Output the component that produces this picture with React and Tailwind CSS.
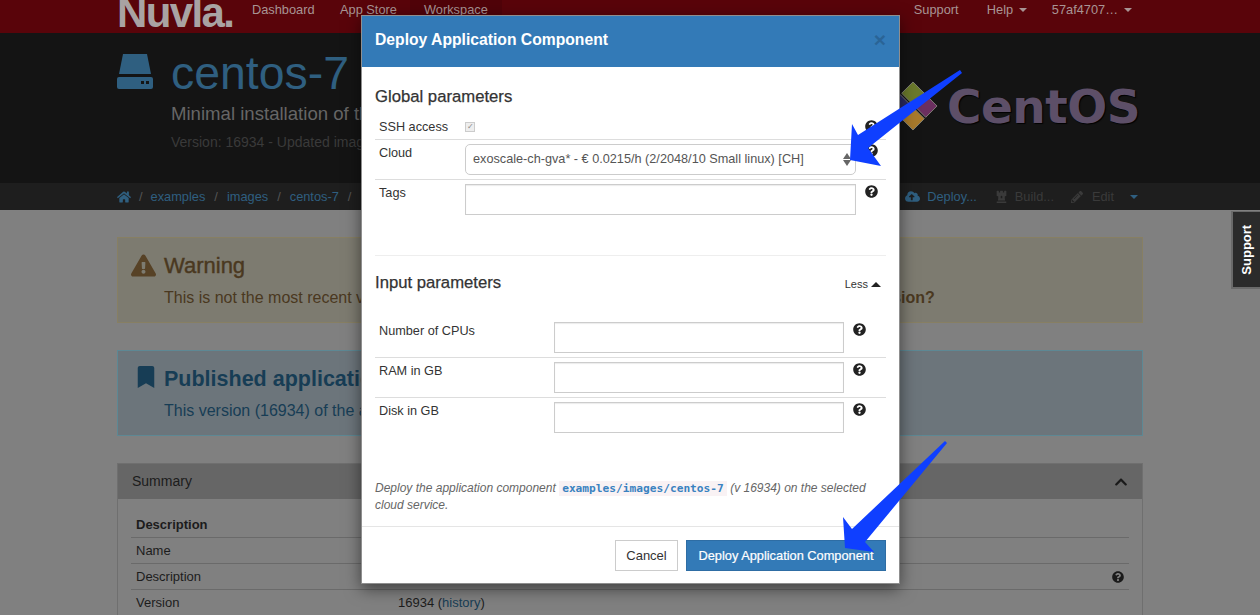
import React from "react";
import {
  FaHome,
  FaCloudUploadAlt,
  FaChessRook,
  FaPencilAlt,
  FaBookmark,
  FaExclamationTriangle,
  FaQuestionCircle,
  FaChevronUp,
} from "react-icons/fa";

const sans = "font-['Liberation_Sans',Arial,sans-serif]";

function Help({ className = "" }) {
  return <FaQuestionCircle className={`text-[13px] text-[#222] ${className}`} />;
}

function Caret({ up, className = "" }) {
  return (
    <span
      className={`inline-block w-0 h-0 ${
        up
          ? "border-x-[5px] border-x-transparent border-b-[5px] border-b-[#222]"
          : "border-x-[4px] border-x-transparent border-t-[4px] border-t-current"
      } ${className}`}
    />
  );
}

function DriveIcon() {
  return (
    <svg width="36" height="36" viewBox="0 0 36 36" className="text-[#2f5f80]">
      <path d="M6 1h24l4 20H2z" fill="currentColor" />
      <rect x="0" y="24" width="36" height="12" rx="2" fill="currentColor" />
      <rect x="24" y="28" width="3" height="3" fill="#141414" />
      <rect x="29" y="28" width="3" height="3" fill="#141414" />
    </svg>
  );
}

function CentosMark() {
  return (
    <svg width="50" height="50" viewBox="0 0 50 50">
      <g transform="rotate(45 25 25)" stroke="#8a8a80" strokeWidth="0.8">
        <rect x="8" y="8" width="16" height="16" fill="#6b7a2c" />
        <rect x="26" y="8" width="16" height="16" fill="#6b2f5f" />
        <rect x="8" y="26" width="16" height="16" fill="#2b2a63" />
        <rect x="26" y="26" width="16" height="16" fill="#a87a2c" />
      </g>
    </svg>
  );
}

function ParamRow({ label, labelWidth, top, children }) {
  return (
    <div className={`flex ${top ? "" : "border-t border-[#ddd]"}`}>
      <div className={`pl-[4px] pt-[4px] text-[12.7px] leading-[18px] text-[#333] ${labelWidth}`}>{label}</div>
      {children}
    </div>
  );
}

function InputRow({ label, top }) {
  return (
    <ParamRow label={label} labelWidth="w-[179px]" top={top}>
      <div className="mt-[4px] mb-[4px] w-[290px] h-[31px] border border-[#ccc] shadow-[inset_0_1px_1px_rgba(0,0,0,0.08)]" />
      <div className="pl-[9px] pt-[2px]">
        <Help className="mt-[3px] text-[12px]" />
      </div>
    </ParamRow>
  );
}

function SummaryRow({ label, value, bold, help }) {
  return (
    <div className="flex items-center h-[26px] border-b border-[#6a6a6a] text-[13px] text-[#1c1c1c]">
      <div className={`w-[267px] pl-[5px] ${bold ? "font-bold" : ""}`}>{label}</div>
      <div className="flex-1">{value}</div>
      {help && <FaQuestionCircle className="mr-[5px] text-[12px] text-[#1a1a1a]" />}
    </div>
  );
}

function Modal() {
  return (
    <div className="absolute left-[361px] top-[15px] w-[539px] h-[569px] flex flex-col bg-white border border-[#8f8f8f] shadow-[0_5px_15px_rgba(0,0,0,0.5)]">
      <div className="flex items-center justify-between h-[51px] pl-[13px] pr-[14px] pb-[4px] bg-[#337ab7]">
        <h4 className="text-[15.7px] font-bold text-white">Deploy Application Component</h4>
        <span className="mr-[-1px] text-[21px] font-bold leading-none text-[#2a6496]">×</span>
      </div>

      <div className="flex-1 px-[13px]">
        <h3 className="mt-[21px] mb-[8px] text-[16.7px] leading-[18px] text-[#333] [-webkit-text-stroke:0.25px_#333]">
          Global parameters
        </h3>
        <ParamRow label="SSH access" labelWidth="w-[90px]" top>
          <div className="flex h-[25px] flex-1 items-center justify-between">
            <span className="flex items-center justify-center w-[10px] h-[10px] border border-[#ccc] bg-[#eee] text-[8px] leading-none text-[#888]">
              ✓
            </span>
            <Help className="mr-[8px] mt-[-1px]" />
          </div>
        </ParamRow>
        <ParamRow label="Cloud" labelWidth="w-[90px]">
          <div className="mt-[4px] mb-[4px] relative flex items-center w-[391px] h-[31px] px-[7px] rounded-[5px] border border-[#ccc] text-[12.7px] text-[#555]">
            exoscale-ch-gva* - € 0.0215/h (2/2048/10 Small linux) [CH]
            <span className="absolute right-[4px] top-[8px] flex flex-col gap-[1px]">
              <span className="w-0 h-0 border-x-[4px] border-x-transparent border-b-[6px] border-b-[#666]" />
              <span className="w-0 h-0 border-x-[4px] border-x-transparent border-t-[6px] border-t-[#666]" />
            </span>
          </div>
          <div className="pl-[9px] pt-[4px]">
            <Help />
          </div>
        </ParamRow>
        <ParamRow label="Tags" labelWidth="w-[90px]">
          <div className="mt-[4px] w-[391px] h-[31px] border border-[#ccc] shadow-[inset_0_1px_1px_rgba(0,0,0,0.08)]" />
          <div className="pl-[9px] pt-[5px]">
            <Help />
          </div>
        </ParamRow>

        <div className="mt-[40px] border-t border-[#eee]" />

        <div className="flex items-center justify-between mt-[16px] mb-[24px]">
          <h3 className="text-[16.7px] leading-[22px] text-[#333] [-webkit-text-stroke:0.25px_#333]">
            Input parameters
          </h3>
          <span className="flex items-center gap-[3px] mt-[3px] mr-[5px] text-[11px] text-[#333]">
            Less
            <Caret up />
          </span>
        </div>

        <InputRow label="Number of CPUs" top />
        <InputRow label="RAM in GB" />
        <InputRow label="Disk in GB" />

        <p className="mt-[43px] text-[12px] italic leading-[17px] text-[#666]">
          Deploy the application component{" "}
          <code className="px-[3px] py-[1px] bg-[#f9f2f4] font-['DejaVu_Sans_Mono',monospace] text-[11.2px] font-bold not-italic text-[#3a82c0]">
            examples/images/centos-7
          </code>{" "}
          (v 16934) on the selected cloud service.
        </p>
      </div>

      <div className="flex justify-end gap-[8px] h-[57px] px-[13px] pt-[13px] border-t border-[#e5e5e5]">
        <button className="w-[63px] h-[31px] border border-[#ccc] bg-white text-[13px] text-[#333]">Cancel</button>
        <button className="w-[200px] h-[31px] border border-[#2e6da4] bg-[#337ab7] text-[12.8px] text-white [-webkit-text-stroke:0.2px_white]">
          Deploy Application Component
        </button>
      </div>
    </div>
  );
}

export default function App() {
  return (
    <div className={`relative h-[615px] overflow-hidden bg-[#808080] ${sans}`}>
      <nav className="h-[33px] overflow-hidden bg-[#59040a] text-[12.8px] text-[#a89494]">
        <div className="flex items-center h-full pl-[117px] pr-[128px]">
          <span className="w-[135px] mt-[-8px] text-[42px] font-bold leading-none tracking-[-1.6px] text-[#a9a3a3]">
            Nuvla.
          </span>
          <span className="mt-[-14px] w-[88px]">Dashboard</span>
          <span className="mt-[-14px] w-[70px]">App Store</span>
          <span className="flex items-center h-full px-[14px] bg-[#500309]">
            <span className="mt-[-14px]">Workspace</span>
          </span>
          <span className="flex-1" />
          <span className="mt-[-14px] w-[73px]">Support</span>
          <span className="mt-[-14px] w-[65px] flex items-center gap-[6px]">
            Help <Caret />
          </span>
          <span className="mt-[-14px] flex items-center gap-[6px]">
            57af4707… <Caret />
          </span>
        </div>
      </nav>

      <header className="relative h-[150px] bg-[#141414] pl-[117px]">
        <div className="flex items-start">
          <div className="w-[54px] pt-[20px]">
            <DriveIcon />
          </div>
          <div>
            <h1 className="mt-[14px] text-[46.4px] leading-[52px] text-[#2f5f80]">centos-7</h1>
            <p className="mt-[3px] text-[18.6px] leading-[24px] text-[#666]">
              Minimal installation of the CentOS 7 operating system
            </p>
            <p className="mt-[6px] text-[14px] leading-[20px] text-[#3a3a3a]">Version: 16934 - Updated image</p>
          </div>
        </div>
        <div className="absolute left-[888px] top-[48px] flex items-center gap-[9px]">
          <CentosMark />
          <span className="font-['DejaVu_Sans',sans-serif] text-[47px] font-bold leading-none tracking-[-0.5px] text-[#5d4f68] [text-shadow:1px_1px_1px_#000]">
            CentOS
          </span>
        </div>
      </header>

      <div className="flex items-center h-[27px] bg-[#1e1e1e] pl-[117px] pr-[122px] text-[12.8px] text-[#555]">
        <FaHome className="text-[14px] text-[#2f5f80]" />
        <span className="mx-[8px]">/</span>
        <span className="text-[#2f5f80]">examples</span>
        <span className="mx-[9px]">/</span>
        <span className="text-[#2f5f80]">images</span>
        <span className="mx-[9px]">/</span>
        <span className="text-[#2f5f80]">centos-7</span>
        <span className="mx-[9px]">/</span>
        <span className="flex-1" />
        <FaCloudUploadAlt className="mr-[7px] text-[15px] text-[#2f5f80]" />
        <span className="mr-[18px] text-[#2f5f80]">Deploy...</span>
        <FaChessRook className="mr-[7px] text-[13px] text-[#3a3a3a]" />
        <span className="mr-[17px] text-[#3a3a3a]">Build...</span>
        <FaPencilAlt className="mr-[9px] text-[12px] text-[#3a3a3a]" />
        <span className="mr-[16px] text-[#3a3a3a]">Edit</span>
        <Caret className="text-[#2f5f80]" />
      </div>

      <main className="px-[117px] pt-[27px]">
        <section className="flex h-[86px] border border-[#877f63] bg-[#7d7b70] text-[#4a3820]">
          <FaExclamationTriangle className="ml-[13px] mt-[15px] text-[25px] text-[#574226]" />
          <div className="ml-[8px]">
            <h3 className="mt-[15px] text-[22px] leading-[26px] [-webkit-text-stroke:0.4px_#4a3820]">Warning</h3>
            <p className="mt-[9px] text-[16px] leading-[20px]">
              This is not the most recent version of this application component. Do you want to{" "}
              <b className="ml-[22px]">use the latest version?</b>
            </p>
          </div>
        </section>

        <section className="flex h-[86px] mt-[27px] border border-[#5d8894] bg-[#6c757b] text-[#173d55]">
          <FaBookmark className="ml-[17px] mt-[15px] text-[22px] text-[#173d55]" />
          <div className="ml-[7px]">
            <h3 className="mt-[14px] text-[21.5px] font-bold leading-[28px] text-[#173d55]">Published application</h3>
            <p className="mt-[8px] text-[16px] leading-[20px]">This version (16934) of the application is published</p>
          </div>
        </section>

        <section className="mt-[27px] border border-[#6f6f6f]">
          <div className="flex items-center justify-between h-[35px] bg-[#666] px-[14px] text-[14px] text-[#1c1c1c]">
            Summary
            <FaChevronUp className="text-[14px] text-[#1a1a1a]" />
          </div>
          <div className="px-[13px] pt-[13px]">
            <SummaryRow label="Description" bold />
            <SummaryRow label="Name" value="centos-7" />
            <SummaryRow label="Description" help />
            <div className="flex items-center h-[26px] text-[13px] text-[#1c1c1c]">
              <div className="w-[267px] pl-[5px]">Version</div>
              <div>
                16934 (<span className="text-[#173d55]">history</span>)
              </div>
            </div>
          </div>
        </section>
      </main>

      <div className="absolute right-0 top-[211px] flex items-center justify-center w-[29px] h-[78px] border-l-2 border-b-2 border-t border-[#6a6a6a] bg-[#2b2b2b]">
        <span className="-rotate-90 text-[13px] font-bold text-white">Support</span>
      </div>

      <Modal />

      <svg className="absolute inset-0 pointer-events-none" width="1260" height="615">
        <polygon points="960,70 858,135 852,124 850,160 881,166 868,148 962,73" fill="#0f3fff" />
        <polygon points="945,441 947,443 865,542 874,552 845,548 843,517 852,529" fill="#0f3fff" />
      </svg>
    </div>
  );
}
